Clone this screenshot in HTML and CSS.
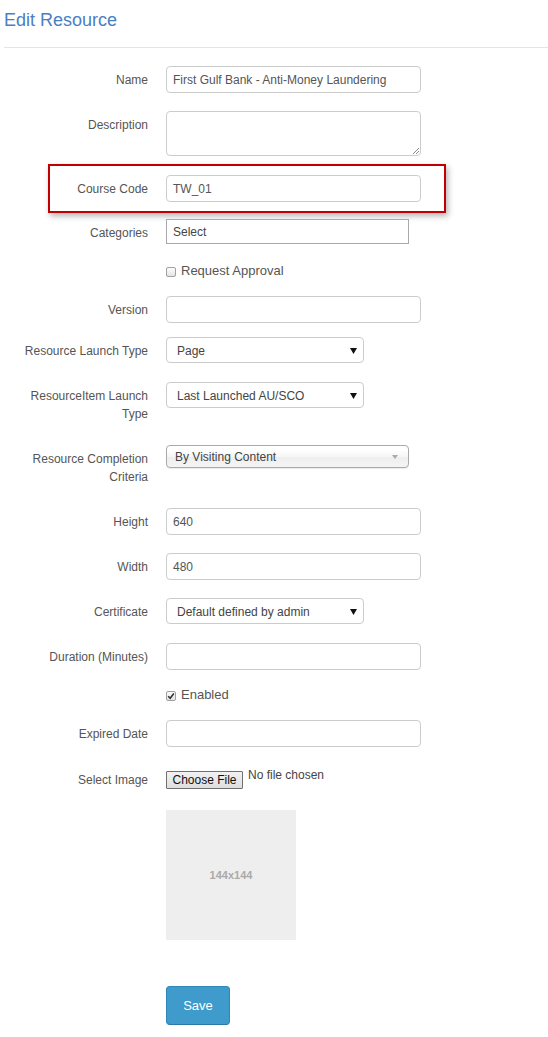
FILE: index.html
```html
<!DOCTYPE html>
<html>
<head>
<meta charset="utf-8">
<title>Edit Resource</title>
<link rel="stylesheet" href="styles.css">
</head>
<body>
<div class="page">
  <h1 class="title">Edit Resource</h1>
  <div class="rule"></div>

  <form class="form">
    <div class="row m18">
      <label class="lbl">Name</label>
      <div class="input">First Gulf Bank - Anti-Money Laundering</div>
    </div>

    <div class="row m8">
      <label class="lbl">Description</label>
      <div class="input textarea">
        <svg class="grip" width="7" height="7" viewBox="0 0 7 7"><path d="M1 7 L7 1 M4 7 L7 4" stroke="#888" stroke-width="1"/></svg>
      </div>
    </div>

    <div class="highlight m6">
      <div class="row inbox">
        <label class="lbl">Course Code</label>
        <div class="input">TW_01</div>
      </div>
    </div>

    <div class="row m17">
      <label class="lbl">Categories</label>
      <div class="input square">Select</div>
    </div>

    <div class="row check-row m17">
      <div class="lbl"></div>
      <div class="check"><span class="box"></span><span>Request Approval</span></div>
    </div>

    <div class="row m14">
      <label class="lbl">Version</label>
      <div class="input"></div>
    </div>

    <div class="row m19">
      <label class="lbl">Resource Launch Type</label>
      <div class="select"><span>Page</span><svg width="7" height="6" viewBox="0 0 7 6"><path d="M0 0 H7 L3.5 6 Z" fill="#111"/></svg></div>
    </div>

    <div class="row m22">
      <label class="lbl two">ResourceItem Launch<br>Type</label>
      <div class="select"><span>Last Launched AU/SCO</span><svg width="7" height="6" viewBox="0 0 7 6"><path d="M0 0 H7 L3.5 6 Z" fill="#111"/></svg></div>
    </div>

    <div class="row m22">
      <label class="lbl two">Resource Completion<br>Criteria</label>
      <div class="chosen"><span>By Visiting Content</span><svg width="6" height="4" viewBox="0 0 6 4"><path d="M0 0 H6 L3 4 Z" fill="#aaa"/></svg></div>
    </div>

    <div class="row m18">
      <label class="lbl">Height</label>
      <div class="input">640</div>
    </div>

    <div class="row m18">
      <label class="lbl">Width</label>
      <div class="input">480</div>
    </div>

    <div class="row m19">
      <label class="lbl">Certificate</label>
      <div class="select"><span>Default defined by admin</span><svg width="7" height="6" viewBox="0 0 7 6"><path d="M0 0 H7 L3.5 6 Z" fill="#111"/></svg></div>
    </div>

    <div class="row m15">
      <label class="lbl">Duration (Minutes)</label>
      <div class="input"></div>
    </div>

    <div class="row check-row m17">
      <div class="lbl"></div>
      <div class="check"><span class="box checked"><svg width="8" height="8" viewBox="0 0 8 8"><path d="M1.2 4.2 L3.2 6.3 L6.8 1.6" fill="none" stroke="#333" stroke-width="1.6"/></svg></span><span>Enabled</span></div>
    </div>

    <div class="row m23">
      <label class="lbl">Expired Date</label>
      <div class="input"></div>
    </div>

    <div class="row file-row m22">
      <label class="lbl flat">Select Image</label>
      <div class="file"><span class="file-btn">Choose File</span><span class="file-text">No file chosen</span></div>
    </div>

    <div class="row m46">
      <div class="lbl"></div>
      <div class="thumb">144x144</div>
    </div>

    <div class="row">
      <div class="lbl"></div>
      <button type="button" class="save">Save</button>
    </div>
  </form>
</div>
</body>
</html>
```

FILE: styles.css
```css
html, body {
  margin: 0;
  padding: 0;
  background: #fff;
}

body {
  font-family: "Liberation Sans", Arial, sans-serif;
  font-size: 12px;
  color: #555;
}

.page {
  padding-left: 4px;
  padding-bottom: 12px;
}

.title {
  margin: 10px 0 0 0;
  font-size: 18px;
  line-height: 20px;
  font-weight: normal;
  color: #4a80c3;
}

.rule {
  margin-top: 17px;
  height: 1px;
  background: #e5e5e5;
  margin-bottom: 18px;
}

.form {
  margin: 0;
}

.row {
  display: flex;
  align-items: flex-start;
  gap: 18px;
}

.m6 { margin-bottom: 6px; }
.m8 { margin-bottom: 8px; }
.m14 { margin-bottom: 14px; }
.m15 { margin-bottom: 15px; }
.m17 { margin-bottom: 17px; }
.m18 { margin-bottom: 18px; }
.m19 { margin-bottom: 19px; }
.m22 { margin-bottom: 22px; }
.m23 { margin-bottom: 23px; }
.m46 { margin-bottom: 46px; }

.lbl {
  flex: 0 0 144px;
  width: 144px;
  text-align: right;
  padding-top: 5px;
  line-height: 18px;
  color: #555;
}

.lbl.flat {
  padding-top: 1px;
}

.input {
  box-sizing: border-box;
  width: 255px;
  height: 27px;
  border: 1px solid #ccc;
  border-radius: 4px;
  padding: 0 6px;
  line-height: 26px;
  color: #555;
  background: #fff;
  white-space: nowrap;
  overflow: hidden;
}

.input.textarea {
  height: 45px;
  position: relative;
}

.grip {
  position: absolute;
  right: 1px;
  bottom: 1px;
}

.input.square {
  width: 243px;
  height: 25px;
  border-radius: 0;
  border-color: #a9a9a9;
  line-height: 25px;
  color: #444;
}

.highlight {
  margin-left: 44px;
  width: 398px;
  box-sizing: border-box;
  border: 2px solid #c00000;
  padding: 9px 0;
  box-shadow: 2px 3px 6px rgba(0, 0, 0, 0.3);
}

.inbox {
  margin-left: -46px;
}

.check-row {
  height: 18px;
}

.check {
  display: flex;
  align-items: center;
  gap: 5px;
  line-height: 18px;
  font-size: 13px;
  color: #555;
  margin-top: 1px;
}

.box {
  box-sizing: border-box;
  width: 10px;
  height: 10px;
  border: 1px solid #a0a0a0;
  border-radius: 2px;
  background: linear-gradient(#fdfdfd, #e4e4e4);
  display: flex;
  align-items: center;
  justify-content: center;
  margin-top: 1px;
}

.select {
  box-sizing: border-box;
  width: 198px;
  height: 26px;
  border: 1px solid #ccc;
  border-radius: 4px;
  padding: 1px 6px 0 10px;
  display: flex;
  align-items: center;
  justify-content: space-between;
  color: #444;
  background: #fff;
}

.chosen {
  box-sizing: border-box;
  width: 243px;
  height: 23px;
  border: 1px solid #aaa;
  border-radius: 4px;
  padding: 0 10px 0 8px;
  display: flex;
  align-items: center;
  justify-content: space-between;
  color: #444;
  background: linear-gradient(#fff 20%, #f6f6f6 50%, #eee 52%, #f4f4f4 100%);
  box-shadow: 0 1px 1px rgba(0, 0, 0, 0.08);
}

.file-row {
  height: 18px;
}

.file {
  display: flex;
  align-items: flex-start;
}

.file-btn {
  box-sizing: border-box;
  width: 77px;
  height: 18px;
  border: 1px solid #707070;
  border-radius: 1px;
  background: linear-gradient(#f2f2f2, #dedede);
  color: #111;
  font-size: 12px;
  line-height: 16px;
  text-align: center;
  margin-top: 1px;
}

.file-text {
  margin-left: 5px;
  margin-top: -4px;
  line-height: 18px;
  color: #444;
}

.thumb {
  width: 130px;
  height: 130px;
  background: #eee;
  color: #aaa;
  font-weight: bold;
  font-size: 11px;
  display: flex;
  align-items: center;
  justify-content: center;
}

.save {
  box-sizing: border-box;
  width: 64px;
  height: 39px;
  border: 1px solid #2f86b8;
  border-bottom-color: #2a7aa8;
  border-radius: 4px;
  background: #3e9bcc;
  color: #fff;
  font-family: "Liberation Sans", Arial, sans-serif;
  font-size: 13px;
  padding: 0;
  margin: 0;
}
```
